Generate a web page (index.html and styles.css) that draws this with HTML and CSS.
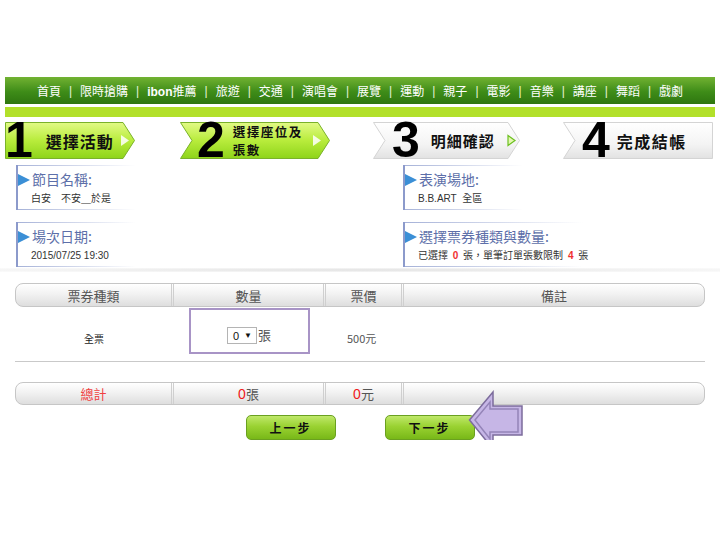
FILE: index.html
```html
<!DOCTYPE html>
<html lang="zh-Hant">
<head>
    <meta charset="UTF-8">
    <meta name="viewport" content="width=device-width, initial-scale=1.0">
    <title>選擇座位及張數</title>
    <link rel="stylesheet" href="styles.css">
</head>
<body>
    <div class="page">
        <!-- top menu -->
        <div class="nav">
            <span>首頁</span><i>|</i>
            <span>限時搶購</span><i>|</i>
            <span><b>ibon</b>推薦</span><i>|</i>
            <span>旅遊</span><i>|</i>
            <span>交通</span><i>|</i>
            <span>演唱會</span><i>|</i>
            <span>展覽</span><i>|</i>
            <span>運動</span><i>|</i>
            <span>親子</span><i>|</i>
            <span>電影</span><i>|</i>
            <span>音樂</span><i>|</i>
            <span>講座</span><i>|</i>
            <span>舞蹈</span><i>|</i>
            <span>戲劇</span>
        </div>
        <div class="nav-strip"></div>

        <!-- order steps -->
        <div class="steps">
            <div class="step step-1">
                <svg class="step-bg" width="130" height="37" viewBox="0 0 130 37">
                    <defs>
                        <linearGradient id="g-on" x1="0" y1="0" x2="0" y2="1">
                            <stop offset="0" stop-color="#e2fa86"/>
                            <stop offset="0.5" stop-color="#b8ec3c"/>
                            <stop offset="1" stop-color="#8ed41a"/>
                        </linearGradient>
                    </defs>
                    <polygon points="0.5,0.5 118,0.5 129.5,18.5 118,36.5 0.5,36.5" fill="url(#g-on)" stroke="#7ab22a"/>
                    <polygon points="116,13 124,18.5 116,24" fill="#fff" opacity="0.85"/>
                </svg>
                <span class="num">1</span>
                <span class="label">選擇活動</span>
            </div>
            <div class="step step-2">
                <svg class="step-bg" width="150" height="37" viewBox="0 0 150 37">
                    <polygon points="0.5,0.5 138,0.5 149.5,18.5 138,36.5 0.5,36.5 12,18.5" fill="url(#g-on)" stroke="#7ab22a"/>
                    <polygon points="133,13 141,18.5 133,24" fill="#fff" opacity="0.85"/>
                </svg>
                <span class="num">2</span>
                <span class="label small"><span>選擇座位及</span><span>張數</span></span>
            </div>
            <div class="step step-3">
                <svg class="step-bg" width="147" height="37" viewBox="0 0 147 37">
                    <defs>
                        <linearGradient id="g-off" x1="0" y1="0" x2="0" y2="1">
                            <stop offset="0" stop-color="#ffffff"/>
                            <stop offset="0.6" stop-color="#f4f4f4"/>
                            <stop offset="1" stop-color="#e2e2e2"/>
                        </linearGradient>
                    </defs>
                    <polygon points="0.5,0.5 135,0.5 146.5,18.5 135,36.5 0.5,36.5 12,18.5" fill="url(#g-off)" stroke="#d4d4d4"/>
                    <polygon points="135,13.5 142,18.5 135,23.5" fill="#e4f8b0" stroke="#6cc020" stroke-width="1.2"/>
                </svg>
                <span class="num">3</span>
                <span class="label">明細確認</span>
            </div>
            <div class="step step-4">
                <svg class="step-bg" width="150" height="37" viewBox="0 0 150 37">
                    <polygon points="0.5,0.5 149.5,0.5 149.5,36.5 0.5,36.5 12,18.5" fill="url(#g-off)" stroke="#d4d4d4"/>
                </svg>
                <span class="num">4</span>
                <span class="label wide">完成結帳</span>
            </div>
        </div>

        <!-- event info -->
        <div class="info">
            <div class="info-col">
                <div class="info-box">
                    <div class="info-title">節目名稱:</div>
                    <div class="info-text">白安　不安＿於是</div>
                </div>
                <div class="info-box">
                    <div class="info-title">場次日期:</div>
                    <div class="info-text">2015/07/25 19:30</div>
                </div>
            </div>
            <div class="info-col">
                <div class="info-box">
                    <div class="info-title">表演場地:</div>
                    <div class="info-text">B.B.ART&nbsp; 全區</div>
                </div>
                <div class="info-box">
                    <div class="info-title">選擇票券種類與數量:</div>
                    <div class="info-text">已選擇 <em>0</em> 張，單筆訂單張數限制 <em>4</em> 張</div>
                </div>
            </div>
        </div>
        <div class="shadow-line"></div>

        <!-- ticket table -->
        <div class="ticket-table">
            <div class="bar">
                <div class="cell">票券種類</div>
                <div class="cell">數量</div>
                <div class="cell">票價</div>
                <div class="cell last">備註</div>
            </div>
            <div class="ticket-row">
                <div class="cell type">全票</div>
                <div class="cell">
                    <div class="qty-box">
                        <span class="qty-select">0 <small>▼</small></span>張
                    </div>
                </div>
                <div class="cell price">500元</div>
                <div class="cell last"></div>
            </div>
            <div class="bar total">
                <div class="cell red">總計</div>
                <div class="cell"><em>0</em>張</div>
                <div class="cell"><em>0</em>元</div>
                <div class="cell last"></div>
            </div>
        </div>

        <div class="buttons">
            <button class="btn">上一步</button>
            <div class="next-wrap">
                <button class="btn">下一步</button>
                <svg class="pointer" width="58" height="62" viewBox="0 0 58 62">
                    <polygon points="1.5,30 25,2 25,16 54,16 54,45 25,45 25,59" fill="#c6b6e6" stroke="#7c6c9c" stroke-width="1.5"/>
                    <polygon points="7,30 22,12 22,19 50,19 50,42 22,42 22,49" fill="none" stroke="#9484b8" stroke-width="1.5"/>
                </svg>
            </div>
        </div>
    </div>
</body>
</html>
```

FILE: styles.css
```css
body {
    margin: 0;
    padding: 0;
    background-color: #fff;
    font-family: "Liberation Sans", "Noto Sans CJK TC", sans-serif;
    color: #333;
}

.page {
    width: 710px;
    padding: 77px 5px 0;
}

.nav {
    height: 27px;
    display: flex;
    justify-content: center;
    align-items: center;
    background: linear-gradient(#72b232, #3e8c18 55%, #2e7610);
    color: #fff;
    font-size: 12px;
}

.nav i {
    font-style: normal;
    margin: 0 8px;
    color: #e8f4d8;
}

.nav b {
    font-weight: bold;
}

.nav-strip {
    height: 10px;
    margin-top: 3px;
    background-color: #b2e02a;
}

.steps {
    display: flex;
    margin-top: 5px;
    height: 37px;
}

.step {
    position: relative;
    display: flex;
    align-items: center;
    height: 37px;
}

.step-bg {
    position: absolute;
    left: 0;
    top: 0;
}

.step-1 { width: 130px; }
.step-2 { width: 150px; margin-left: 45px; }
.step-3 { width: 147px; margin-left: 43px; }
.step-4 { width: 150px; margin-left: 43px; }

.num {
    position: relative;
    font-family: "Liberation Sans", sans-serif;
    font-weight: bold;
    font-size: 50px;
    line-height: 37px;
    color: #000;
    letter-spacing: -1px;
}

.step-1 .num { margin-left: 0; }
.step-2 .num { margin-left: 17px; }
.step-3 .num { margin-left: 19px; }
.step-4 .num { margin-left: 19px; }

.label {
    position: relative;
    margin-left: 12px;
    font-family: "Noto Sans CJK TC", sans-serif;
    font-weight: bold;
    font-size: 15px;
    line-height: 18px;
    color: #111;
    letter-spacing: 1px;
}

.step-1 .label { font-size: 16px; margin-left: 14px; }
.label.wide { font-size: 16px; margin-left: 8px; letter-spacing: 1.5px; }

.label.small {
    display: flex;
    flex-direction: column;
    margin-left: 9px;
    font-size: 12.5px;
    line-height: 18px;
    letter-spacing: 1.5px;
}

.info {
    display: grid;
    grid-template-columns: 387px 1fr;
    padding-left: 11px;
    margin-top: 6px;
}

.info-col {
    display: flex;
    flex-direction: column;
    gap: 12px;
}

.info-box {
    height: 45px;
    width: 120px;
    box-sizing: border-box;
    border-left: 2px solid #8c9acb;
    padding: 5px 0 0 14px;
    position: relative;
    background:
        linear-gradient(to right, #a6b2d8, rgba(255, 255, 255, 0)) top left / 100% 1px no-repeat,
        linear-gradient(to right, #a6b2d8, rgba(255, 255, 255, 0)) bottom left / 100% 1px no-repeat;
}

.info-col:last-child .info-box:last-child {
    width: 180px;
}

.info-title {
    font-family: "Noto Sans CJK TC", sans-serif;
    font-size: 14px;
    line-height: 18px;
    color: #5d6fa9;
    white-space: nowrap;
}

.info-title::before {
    content: "";
    position: absolute;
    left: 0;
    top: 9px;
    border-left: 12px solid #3b8fd6;
    border-top: 6px solid transparent;
    border-bottom: 6px solid transparent;
}

.info-text {
    margin-top: 5px;
    margin-left: -1px;
    font-size: 10px;
    line-height: 12px;
    color: #333;
    white-space: nowrap;
}

.info-text em {
    font-style: normal;
    color: #f03030;
    font-weight: bold;
    padding: 0 2px;
}

.shadow-line {
    height: 4px;
    margin: 1px -5px 0;
    background: radial-gradient(ellipse at center, #e2e2e2 0%, #f2f2f2 55%, #fcfcfc 100%);
}

.ticket-table {
    width: 690px;
    margin: 11px 0 0 10px;
}

.bar {
    display: grid;
    grid-template-columns: 158px 152px 78px 1fr;
    height: 24px;
    box-sizing: border-box;
    border: 1px solid #c6c6c6;
    border-radius: 8px;
    background: linear-gradient(#ffffff, #f2f2f2 45%, #dedede);
    overflow: hidden;
}

.cell {
    display: flex;
    align-items: center;
    justify-content: center;
    font-family: "Noto Sans CJK TC", sans-serif;
    font-size: 13px;
    color: #555;
}

.bar .cell {
    border-right: 3px double #cfcfcf;
}

.bar .cell.last {
    border-right: none;
}

.ticket-row {
    display: grid;
    grid-template-columns: 158px 152px 78px 1fr;
    height: 54px;
    border-bottom: 1px solid #c9c9c9;
}

.ticket-row .cell {
    align-items: flex-start;
    padding-top: 23px;
}

.ticket-row .type {
    font-size: 10px;
    color: #222;
    padding-top: 24px;
}

.ticket-row .price {
    justify-content: flex-start;
    padding-left: 22px;
    font-size: 11px;
}

.ticket-row .cell:nth-child(2) {
    padding-top: 1px;
    align-items: flex-start;
}

.qty-box {
    width: 121px;
    height: 46px;
    box-sizing: border-box;
    border: 2px solid #a894c6;
    display: flex;
    align-items: flex-end;
    justify-content: center;
    padding-bottom: 8px;
    font-size: 13px;
    color: #555;
}

.qty-select {
    display: inline-flex;
    align-items: center;
    gap: 5px;
    height: 15px;
    padding: 0 4px 0 5px;
    margin-right: 1px;
    border: 1px solid #b4b4b4;
    background-color: #fff;
    font-family: "Liberation Sans", sans-serif;
    font-size: 11px;
    color: #111;
}

.qty-select small {
    font-size: 8px;
}

.total {
    margin-top: 20px;
    height: 23px;
}

.total .cell em {
    font-style: normal;
    font-family: "Liberation Sans", sans-serif;
    color: #f01818;
    font-size: 14px;
}

.cell.red {
    color: #f04040;
}

.buttons {
    display: flex;
    justify-content: center;
    gap: 49px;
    margin-top: 10px;
}

.next-wrap {
    position: relative;
}

.btn {
    width: 90px;
    height: 25px;
    border: 1px solid #6aa020;
    border-radius: 5px;
    background: linear-gradient(#bfe86a, #9ad232 45%, #78b818);
    font-family: "Noto Sans CJK TC", sans-serif;
    font-weight: bold;
    font-size: 12px;
    color: #111;
    letter-spacing: 2px;
    cursor: pointer;
}

.pointer {
    position: absolute;
    left: 83px;
    top: -25px;
}
```
